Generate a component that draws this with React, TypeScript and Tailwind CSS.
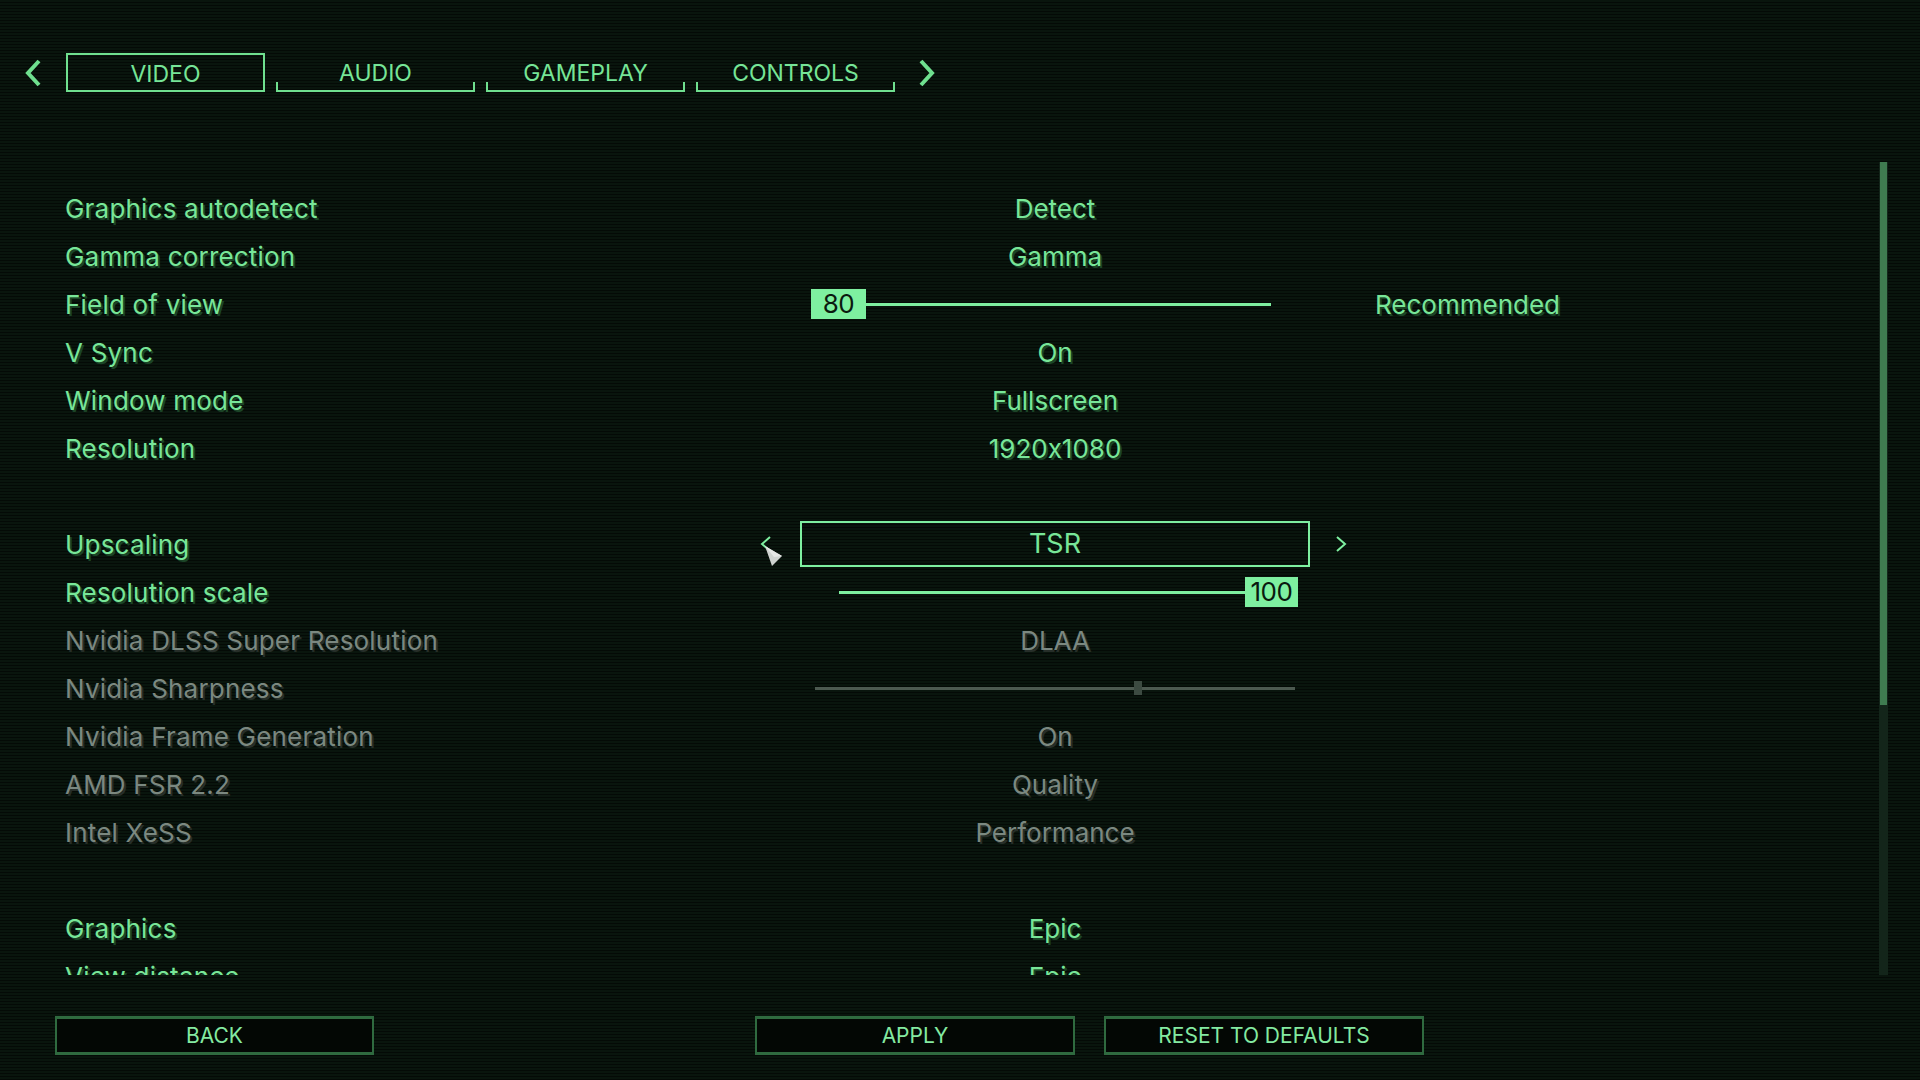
import React from "react";

type Row =
  | { kind: "text"; label: string; value: string; disabled?: boolean }
  | { kind: "fov" }
  | { kind: "select"; label: string; value: string }
  | { kind: "scale" }
  | { kind: "sharpness" }
  | { kind: "spacer" };

const rows: Row[] = [
  { kind: "text", label: "Graphics autodetect", value: "Detect" },
  { kind: "text", label: "Gamma correction", value: "Gamma" },
  { kind: "fov" },
  { kind: "text", label: "V Sync", value: "On" },
  { kind: "text", label: "Window mode", value: "Fullscreen" },
  { kind: "text", label: "Resolution", value: "1920x1080" },
  { kind: "spacer" },
  { kind: "select", label: "Upscaling", value: "TSR" },
  { kind: "scale" },
  { kind: "text", label: "Nvidia DLSS Super Resolution", value: "DLAA", disabled: true },
  { kind: "sharpness" },
  { kind: "text", label: "Nvidia Frame Generation", value: "On", disabled: true },
  { kind: "text", label: "AMD FSR 2.2", value: "Quality", disabled: true },
  { kind: "text", label: "Intel XeSS", value: "Performance", disabled: true },
  { kind: "spacer" },
  { kind: "text", label: "Graphics", value: "Epic" },
  { kind: "text", label: "View distance", value: "Epic" },
];

const on = "text-[#78e698] [text-shadow:2px_2px_0_#1b4427]";
const off = "text-[#7b8880] [text-shadow:2px_2px_0_#262e29]";

function Label({ text, disabled, width = "w-[735px]" }: { text: string; disabled?: boolean; width?: string }) {
  return (
    <div className={`${width} shrink-0 text-[26px] tracking-[0.2px] ${disabled ? off : on}`}>{text}</div>
  );
}

function Chevron({ dir, className }: { dir: "left" | "right"; className: string }) {
  return (
    <svg viewBox="0 0 19 28" className={className} fill="none" stroke="#6fe08f" strokeWidth="4">
      {dir === "left" ? <path d="M16 2 L5 14 L16 26" /> : <path d="M3 2 L14 14 L3 26" />}
    </svg>
  );
}

function SmallChevron({ dir }: { dir: "left" | "right" }) {
  return (
    <svg viewBox="0 0 11 16" className="w-[11px] h-[16px] shrink-0" fill="none" stroke="#7ef0a0" strokeWidth="2">
      {dir === "left" ? <path d="M10 1 L2 8 L10 15" /> : <path d="M1 1 L9 8 L1 15" />}
    </svg>
  );
}

function ValueBox({ text, w }: { text: string; w: string }) {
  return (
    <div className={`${w} h-[30px] shrink-0 bg-[#7ef0a0] text-[#0a1a0f] text-[26px] leading-[30px] flex items-center justify-center tracking-[-0.5px]`}>
      {text}
    </div>
  );
}

function SettingRow({ row }: { row: Row }) {
  if (row.kind === "spacer") return <div className="h-[48px]" />;

  if (row.kind === "text") {
    return (
      <div className="flex items-center h-[48px]">
        <Label text={row.label} disabled={row.disabled} />
        <div className={`w-[510px] text-center text-[26px] ${row.disabled ? off : on}`}>{row.value}</div>
      </div>
    );
  }

  if (row.kind === "fov") {
    return (
      <div className="flex items-center h-[48px]">
        <Label text="Field of view" />
        <div className="w-[510px] pl-[11px] flex items-center">
          <div className="w-[460px] flex items-center">
            <ValueBox text="80" w="w-[55px]" />
            <div className="flex-1 h-[3px] bg-[#7ef0a0]" />
          </div>
        </div>
        <div className={`ml-[65px] text-[26px] ${on}`}>Recommended</div>
      </div>
    );
  }

  if (row.kind === "select") {
    return (
      <div className="flex items-center h-[48px]">
        <Label text={row.label} width="w-[695px]" />
        <SmallChevron dir="left" />
        <div className="ml-[29px] w-[510px] h-[46px] border-2 border-[#7ef0a0] flex items-center justify-center text-[27px] text-[#78e698]">
          {row.value}
        </div>
        <div className="ml-[26px]">
          <SmallChevron dir="right" />
        </div>
      </div>
    );
  }

  if (row.kind === "scale") {
    return (
      <div className="flex items-center h-[48px]">
        <Label text="Resolution scale" />
        <div className="w-[510px] pl-[39px] flex items-center">
          <div className="w-[459px] flex items-center">
            <div className="flex-1 h-[3px] bg-[#7ef0a0]" />
            <ValueBox text="100" w="w-[53px]" />
          </div>
        </div>
      </div>
    );
  }

  return (
    <div className="flex items-center h-[48px]">
      <Label text="Nvidia Sharpness" disabled />
      <div className="w-[510px] pl-[15px] flex items-center">
        <div className="relative w-[480px] h-[14px] flex items-center">
          <div className="w-full h-[3px] bg-[#4c5950]" />
          <div className="absolute left-[319px] top-0 w-[8px] h-[14px] bg-[#3c4a41]" />
        </div>
      </div>
    </div>
  );
}

function Tab({ label, active }: { label: string; active?: boolean }) {
  if (active) {
    return (
      <div className="w-[199px] h-[39px] border-2 border-[#6fe08f] flex items-center justify-center pt-[3px] text-[23px] text-[#76e597]">
        {label}
      </div>
    );
  }
  return (
    <div className="relative w-[199px] h-[39px] flex items-center justify-center pt-[3px] text-[23px] text-[#76e597] border-b-2 border-[#6fe08f]">
      <span className="absolute left-0 bottom-0 w-[2px] h-[8px] bg-[#6fe08f]" />
      <span className="absolute right-0 bottom-0 w-[2px] h-[8px] bg-[#6fe08f]" />
      {label}
    </div>
  );
}

function FooterButton({ label, w = "w-[320px]" }: { label: string; w?: string }) {
  return (
    <div className={`${w} h-[39px] border-x-2 border-y-[3px] border-[#2f6a3f] bg-[#030704] flex items-center justify-center text-[21px] text-[#84eaa1]`}>
      {label}
    </div>
  );
}

export default function App() {
  return (
    <div className="relative w-[1920px] h-[1080px] overflow-hidden bg-[#071009] bg-[image:repeating-linear-gradient(to_bottom,#09150d_0px,#09150d_2px,#040a06_2px,#040a06_3px)] [font-family:Inter,'Noto_Sans',sans-serif] [font-feature-settings:'calt'_0]">
      {/* category tabs */}
      <div className="flex items-center h-[39px] mt-[53px] ml-[23px]">
        <Chevron dir="left" className="w-[19px] h-[28px] shrink-0" />
        <div className="ml-[24px] flex gap-[11px]">
          <Tab label="VIDEO" active />
          <Tab label="AUDIO" />
          <Tab label="GAMEPLAY" />
          <Tab label="CONTROLS" />
        </div>
        <Chevron dir="right" className="ml-[23px] w-[19px] h-[28px] shrink-0" />
      </div>

      {/* settings list + scrollbar */}
      <div className="flex mt-[70px] h-[813px]">
        <div className="flex-1 overflow-hidden pt-[22px] pl-[65px]">
          {rows.map((r, i) => (
            <SettingRow key={i} row={r} />
          ))}
        </div>
        <div className="mr-[32px] w-[9px] h-full bg-[#13251a] flex justify-center">
          <div className="w-[7px] h-[543px] bg-[#3f7b50]" />
        </div>
      </div>

      {/* footer actions */}
      <div className="flex mt-[41px] ml-[55px]">
        <FooterButton label="BACK" w="w-[319px]" />
        <div className="ml-[381px] flex gap-[29px]">
          <FooterButton label="APPLY" />
          <FooterButton label="RESET TO DEFAULTS" />
        </div>
      </div>

      {/* mouse pointer */}
      <svg viewBox="0 0 19 22" className="absolute left-[764px] top-[545px] w-[19px] h-[22px]">
        <polygon points="1,1 18,11 8,21" fill="#cfd3d0" />
        <polygon points="1,1 18,11 10,12" fill="#e6e8e6" />
      </svg>
    </div>
  );
}
